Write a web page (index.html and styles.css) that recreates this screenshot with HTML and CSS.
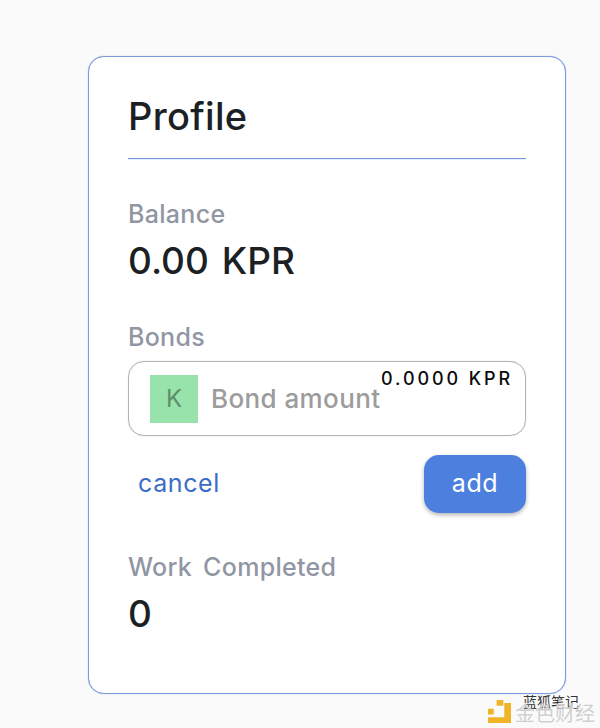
FILE: index.html
```html
<!DOCTYPE html>
<html lang="en">
<head>
<meta charset="utf-8">
<title>Profile</title>
<link rel="stylesheet" href="styles.css">
</head>
<body>
<main class="card">
  <h1 class="title">Profile</h1>
  <section class="group balance">
    <div class="label">Balance</div>
    <div class="value">0.00 KPR</div>
  </section>
  <section class="group bonds">
    <div class="label">Bonds</div>
    <div class="field">
      <span class="token">K</span>
      <span class="placeholder">Bond amount</span>
      <span class="max">0.0000 KPR</span>
    </div>
    <div class="actions">
      <span class="cancel">cancel</span>
      <span class="add">add</span>
    </div>
  </section>
  <section class="group work">
    <div class="label">Work Completed</div>
    <div class="value">0</div>
  </section>
</main>
<div class="watermark">
  <svg class="mark" width="23" height="23" viewBox="0 0 24 24" aria-hidden="true">
    <path fill="#f0b429" d="M9 0h7v6H9zM0 9h6v6H0zM17 3h7v21H0v-6h17z"/>
  </svg>
  <span class="wm-small">蓝狐笔记</span>
  <span class="wm-big">金色财经</span>
</div>
</body>
</html>
```
FILE: styles.css
```css
* { box-sizing: border-box; }
html, body { margin: 0; height: 728px; overflow: hidden; }
body {
  background: #fafafa;
  padding: 56px 0 0 88px;
  font-family: "Inter", "Noto Sans", sans-serif;
  position: relative;
}
.card {
  width: 478px;
  height: 638px;
  background: #fff;
  border: 1px solid #7c9bdb;
  border-radius: 16px;
  box-shadow: 0 0 1px #7c9bdb;
  padding: 35px 39px 0;
}
.title {
  margin: 0;
  height: 67px;
  font-size: 38px;
  line-height: 48px;
  font-weight: 500;
  color: #1c1f24;
  letter-spacing: 0.3px;
  border-bottom: 1px solid #7397da;
  box-shadow: 0 1px 1px -1px #7397da;
}
.group { display: flex; flex-direction: column; }
.balance { margin-top: 41px; }
.bonds { margin-top: 41px; }
.work { margin-top: 40px; }
.label {
  font-size: 25px;
  line-height: 28px;
  font-weight: 500;
  color: #9096a3;
  letter-spacing: 0.3px;
  word-spacing: 4px;
}
.value {
  margin-top: 12px;
  font-size: 37px;
  line-height: 42px;
  font-weight: 500;
  color: #1c1f24;
  word-spacing: 3px;
}
.field {
  position: relative;
  margin-top: 10px;
  height: 75px;
  border: 1px solid #b3b3b3;
  border-radius: 16px;
  box-shadow: 0 0 1px #b3b3b3;
  display: flex;
  align-items: center;
  padding-left: 21px;
  gap: 13px;
}
.token {
  width: 48px;
  height: 48px;
  background: #98e3ab;
  color: #5b8f6b;
  font-size: 24px;
  display: flex;
  align-items: center;
  justify-content: center;
}
.placeholder {
  font-size: 26px;
  font-weight: 500;
  color: #9c9c9c;
  letter-spacing: 0.4px;
}
.max {
  position: absolute;
  top: 6px;
  right: 12px;
  font-size: 18px;
  line-height: 22px;
  font-weight: 500;
  color: #0c0c0c;
  letter-spacing: 2.9px;
}
.actions {
  margin-top: 19px;
  display: flex;
  align-items: center;
  justify-content: space-between;
}
.cancel {
  padding: 0 0 3px 10px;
  font-size: 25px;
  color: #3b6cc8;
  letter-spacing: 0.6px;
}
.add {
  width: 102px;
  height: 58px;
  padding-bottom: 3px;
  border-radius: 15px;
  background: #4d7fdf;
  color: #fff;
  font-size: 25px;
  display: flex;
  align-items: center;
  justify-content: center;
  letter-spacing: 0.6px;
  box-shadow: 0 2px 4px rgba(0, 0, 0, 0.3);
}
.watermark {
  position: absolute;
  left: 488px;
  top: 700px;
  width: 112px;
  height: 24px;
}
.mark { display: block; }
.wm-small {
  position: absolute;
  top: -7px;
  left: 35px;
  font-family: "Noto Sans CJK SC", sans-serif;
  font-size: 14px;
  line-height: 16px;
  white-space: nowrap;
  color: #333;
}
.wm-big {
  position: absolute;
  top: 2px;
  left: 27px;
  font-family: "Noto Sans CJK SC", sans-serif;
  font-size: 20px;
  line-height: 22px;
  white-space: nowrap;
  color: #cfcfcf;
  text-shadow: 0 0 2px #fff;
}
```
